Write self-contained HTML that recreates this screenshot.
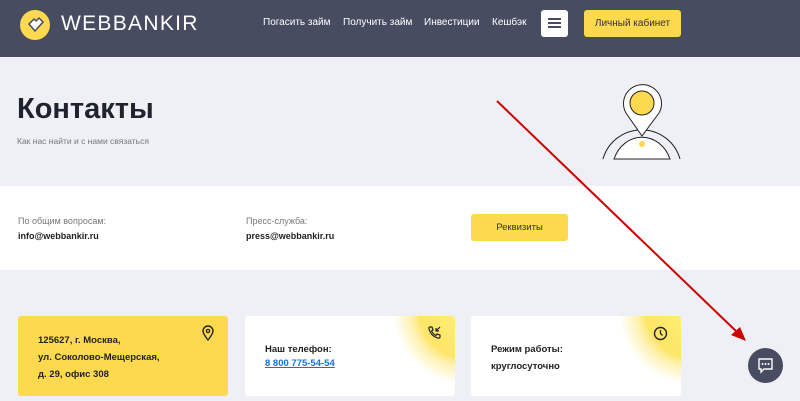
<!DOCTYPE html>
<html><head><meta charset="utf-8"><style>
*{margin:0;padding:0;box-sizing:border-box}
body{width:800px;height:401px;overflow:hidden;background:#eef0f6;font-family:"Liberation Sans",sans-serif;position:relative}
.hdr{position:absolute;left:0;top:0;width:800px;height:57px;background:#474c60}
.abs{position:absolute}
.nav{color:#fff;font-size:10px;top:17px;white-space:nowrap}
.btn{display:flex;align-items:center;justify-content:center}
.card{position:absolute;top:316px;height:80px;border-radius:3px;background:#fff;overflow:hidden}
.glow{background:radial-gradient(circle at 105% -5%,#fff176 0,#fde567 45px,rgba(253,229,103,0.5) 55px,rgba(255,255,255,0) 72px),#fff}
.ct{font-size:9.5px;font-weight:bold;color:#222;line-height:17px;white-space:nowrap}
</style></head><body>
<div class="hdr">
  <div class="abs" style="left:20px;top:10px;width:30px;height:30px;border-radius:50%;background:#fcd94e"></div>
  <svg class="abs" style="left:20px;top:10px" width="30" height="30" viewBox="0 0 30 30"><path d="M9 14 L14 9 L16 11 L19 8 L23 12 L15 21 Z" fill="#fff" stroke="#474c60" stroke-width="1.5"/></svg>
  <div class="abs" style="left:61px;top:12px;color:#fff;font-size:21px;letter-spacing:1.3px">WEBBANKIR</div>
  <div class="abs nav" style="left:263px;top:17px">Погасить займ</div>
  <div class="abs nav" style="left:343px;top:17px">Получить займ</div>
  <div class="abs nav" style="left:424px;top:17px">Инвестиции</div>
  <div class="abs nav" style="left:492px;top:17px">Кешбэк</div>
  <div class="abs" style="left:541px;top:10px;width:27px;height:27px;background:#fff;border-radius:3px"></div>
  <div class="abs" style="left:548px;top:18px;width:13px;height:2px;background:#474c60;box-shadow:0 4px 0 #474c60,0 8px 0 #474c60"></div>
  <div class="abs btn" style="left:584px;top:10px;width:97px;height:27px;background:#fcd94e;border-radius:3px;font-size:10px;color:#333">Личный кабинет</div>
</div>
<div class="abs" style="left:17px;top:93px;font-size:29px;font-weight:bold;color:#1f2330">Контакты</div>
<div class="abs" style="left:17px;top:136px;font-size:8.5px;color:#777">Как нас найти и с нами связаться</div>
<svg class="abs" style="left:600px;top:80px" width="90" height="80" viewBox="0 0 90 80">
  <path d="M3 79 A40 40 0 0 1 80 79" fill="none" stroke="#222" stroke-width="1"/>
  <path d="M14 79 A30 34 0 0 1 70 79 Z" fill="#fff" stroke="#222" stroke-width="1"/>
  <path d="M42 56 L26 33 A19 19 0 1 1 59 33 Z" fill="#fff" stroke="#222" stroke-width="1"/>
  <circle cx="42" cy="23" r="12" fill="#fcd94e" stroke="#222" stroke-width="1"/>
  <circle cx="42" cy="64" r="3" fill="#fcd94e"/>
</svg>
<div class="abs" style="left:0;top:186px;width:800px;height:84px;background:#fff"></div>
<div class="abs" style="left:18px;top:216px;font-size:9px;color:#777">По общим вопросам:</div>
<div class="abs" style="left:18px;top:231px;font-size:9px;font-weight:bold;color:#222">info@webbankir.ru</div>
<div class="abs" style="left:246px;top:216px;font-size:9px;color:#777">Пресс-служба:</div>
<div class="abs" style="left:246px;top:231px;font-size:9px;font-weight:bold;color:#222">press@webbankir.ru</div>
<div class="abs btn" style="left:471px;top:214px;width:97px;height:27px;background:#fcd94e;border-radius:3px;font-size:9.5px;color:#333">Реквизиты</div>

<div class="card" style="left:18px;width:210px;background:#fcd94e">
  <div class="abs ct" style="left:20px;top:16px">125627, г. Москва,<br>ул. Соколово-Мещерская,<br>д. 29, офис 308</div>
  <svg class="abs" style="left:183px;top:9px" width="14" height="16" viewBox="0 0 14 16"><path d="M7 15 C3 10 2 8 2 6 A5 5 0 0 1 12 6 C12 8 11 10 7 15Z" fill="none" stroke="#222" stroke-width="1.4"/><circle cx="7" cy="6" r="1.6" fill="none" stroke="#222" stroke-width="1.3"/></svg>
</div>
<div class="card glow" style="left:245px;width:210px">
  <div class="abs ct" style="left:20px;top:25px">Наш телефон:</div>
  <div class="abs" style="left:20px;top:42px;font-size:9.5px;font-weight:bold;color:#1a6fe0;text-decoration:underline">8 800 775-54-54</div>
  <svg class="abs" style="left:182px;top:9px" width="15" height="15" viewBox="0 0 15 15"><path d="M3 2 L5 2 L6 5 L4.5 6 C5.5 8 7 9.5 9 10.5 L10 9 L13 10 L13 12 C13 13 12 13.5 11 13 C6 11.5 3.5 9 2 4 C1.8 3 2 2 3 2Z" fill="none" stroke="#222" stroke-width="1.2"/><path d="M13 2 L9 6 M9 3 L9 6 L12 6" fill="none" stroke="#222" stroke-width="1.2"/></svg>
</div>
<div class="card glow" style="left:471px;width:210px">
  <div class="abs ct" style="left:20px;top:25px">Режим работы:</div>
  <div class="abs ct" style="left:20px;top:42px">круглосуточно</div>
  <svg class="abs" style="left:182px;top:10px" width="15" height="15" viewBox="0 0 15 15"><circle cx="7.5" cy="7.5" r="6" fill="none" stroke="#222" stroke-width="1.4"/><path d="M7.5 4 L7.5 7.5 L9.5 9.5" fill="none" stroke="#222" stroke-width="1.3"/></svg>
</div>
<svg class="abs" style="left:0;top:0" width="800" height="401">
  <line x1="497" y1="101" x2="738" y2="333" stroke="#c00" stroke-width="2"/>
  <path d="M746 341 L731 335 L740 327 Z" fill="#c00"/>
</svg>
<div class="abs" style="left:748px;top:348px;width:35px;height:35px;border-radius:50%;background:#474c60"></div>
<svg class="abs" style="left:757px;top:357px" width="17" height="17" viewBox="0 0 17 17"><path d="M2 2 H15 V12 H7 L4 15 V12 H2 Z" fill="none" stroke="#fff" stroke-width="1.4"/><circle cx="5.5" cy="7" r="1" fill="#fff"/><circle cx="8.5" cy="7" r="1" fill="#fff"/><circle cx="11.5" cy="7" r="1" fill="#fff"/></svg>
</body></html>
